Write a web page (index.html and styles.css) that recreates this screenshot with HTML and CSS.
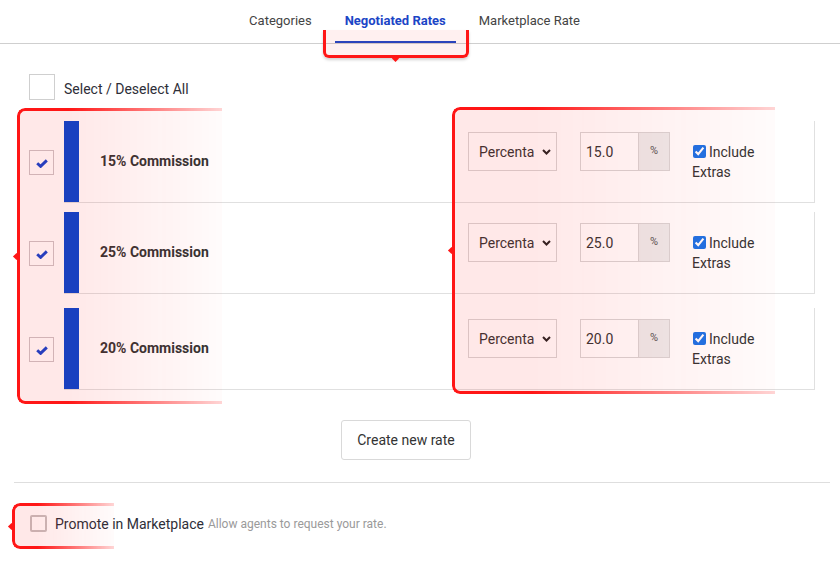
FILE: index.html
```html
<!DOCTYPE html>
<html lang="en">
<head>
<meta charset="utf-8">
<title>Negotiated Rates</title>
<link rel="stylesheet" href="styles.css">
</head>
<body>
<nav class="tabs">
  <a class="tab">Categories</a>
  <a class="tab active">Negotiated Rates</a>
  <a class="tab">Marketplace Rate</a>
</nav>

<main class="content">
  <div class="select-all">
    <span class="box big"></span>
    <span class="select-all-label">Select / Deselect All</span>
  </div>

  <div class="rates">
    <div class="rate-row first">
      <span class="box check"><svg viewBox="0 0 12 9" width="12" height="9"><path d="M1.2 4.3 L4.6 7.4 L10.8 1.4" fill="none" stroke="#1042d0" stroke-width="2.9"/></svg></span>
      <div class="card">
        <span class="bar"></span>
        <span class="rate-name">15% Commission</span>
        <div class="controls">
          <div class="select"><span class="select-text">Percenta</span><svg class="chev" viewBox="0 0 9 6" width="9" height="6"><path d="M1 1 L4.5 4.5 L8 1" fill="none" stroke="#222" stroke-width="2"/></svg></div>
          <div class="input-group"><span class="input">15.0</span><span class="addon">%</span></div>
          <label class="include"><input type="checkbox" checked>Include Extras</label>
        </div>
      </div>
    </div>
    <div class="rate-row second">
      <span class="box check"><svg viewBox="0 0 12 9" width="12" height="9"><path d="M1.2 4.3 L4.6 7.4 L10.8 1.4" fill="none" stroke="#1042d0" stroke-width="2.9"/></svg></span>
      <div class="card">
        <span class="bar"></span>
        <span class="rate-name">25% Commission</span>
        <div class="controls">
          <div class="select"><span class="select-text">Percenta</span><svg class="chev" viewBox="0 0 9 6" width="9" height="6"><path d="M1 1 L4.5 4.5 L8 1" fill="none" stroke="#222" stroke-width="2"/></svg></div>
          <div class="input-group"><span class="input">25.0</span><span class="addon">%</span></div>
          <label class="include"><input type="checkbox" checked>Include Extras</label>
        </div>
      </div>
    </div>
    <div class="rate-row">
      <span class="box check"><svg viewBox="0 0 12 9" width="12" height="9"><path d="M1.2 4.3 L4.6 7.4 L10.8 1.4" fill="none" stroke="#1042d0" stroke-width="2.9"/></svg></span>
      <div class="card">
        <span class="bar"></span>
        <span class="rate-name">20% Commission</span>
        <div class="controls">
          <div class="select"><span class="select-text">Percenta</span><svg class="chev" viewBox="0 0 9 6" width="9" height="6"><path d="M1 1 L4.5 4.5 L8 1" fill="none" stroke="#222" stroke-width="2"/></svg></div>
          <div class="input-group"><span class="input">20.0</span><span class="addon">%</span></div>
          <label class="include"><input type="checkbox" checked>Include Extras</label>
        </div>
      </div>
    </div>
  </div>

  <div class="actions">
    <button class="btn">Create new rate</button>
  </div>

  <hr class="divider">

  <div class="promote">
    <span class="small-box"></span>
    <span class="promote-label">Promote in Marketplace</span>
    <span class="hint">Allow agents to request your rate.</span>
  </div>
</main>

<div class="annot annot-tab"></div>
<div class="annot annot-side annot-left"></div>
<div class="annot annot-side annot-right"></div>
<div class="annot annot-side annot-promote"></div>
</body>
</html>
```

FILE: styles.css
```css
* { box-sizing: border-box; }

html, body {
  margin: 0;
  padding: 0;
  background: #fff;
}

body {
  font-family: Roboto, "Liberation Sans", Arial, sans-serif;
  color: #333;
  width: 840px;
  height: 576px;
  overflow: hidden;
  position: relative;
}

/* Tabs */
.tabs {
  display: flex;
  justify-content: center;
  gap: 13px;
  padding-right: 11px;
  height: 44px;
  border-bottom: 1px solid #cfcfcf;
}

.tab {
  display: block;
  padding: 0 10px;
  font-size: 13px;
  line-height: 41px;
  height: 43px;
  color: #444;
  border-bottom: 2px solid transparent;
}

.tab.active {
  color: #1b45c6;
  font-weight: 700;
  border-bottom-color: #1b45c6;
}

/* Content */
.content {
  margin: 0 25px 0 29px;
}

.select-all {
  display: flex;
  align-items: center;
  margin-top: 30px;
  gap: 9px;
}

.select-all-label {
  font-size: 14px;
  color: #2e2e38;
  padding-top: 3px;
}

.box {
  display: flex;
  align-items: center;
  justify-content: center;
  width: 25px;
  height: 25px;
  border: 1px solid #cdc4c8;
  background: #fff;
  flex: none;
}

.box.big {
  width: 26px;
  height: 26px;
  border-color: #cfcfcf;
}

.box.check svg {
  margin-top: 2px;
}

.rates {
  margin-top: 21px;
}

.rate-row {
  display: flex;
  align-items: center;
  gap: 10px;
}

.rate-row.first { margin-bottom: 9px; }
.rate-row.second { margin-bottom: 14px; }

.card {
  flex: 1;
  display: flex;
  height: 82px;
  border-right: 1px solid #e0e0e0;
  border-bottom: 1px solid #e0e0e0;
  background: #fff;
}

.bar {
  width: 15px;
  flex: none;
  background: #0044d2;
}

.rate-name {
  flex: 1;
  align-self: center;
  margin-left: 21px;
  margin-top: -2px;
  font-size: 14px;
  font-weight: 700;
  color: #333;
}

.controls {
  display: flex;
  align-items: flex-start;
  padding-top: 11px;
  padding-right: 22px;
}

.select {
  display: flex;
  align-items: center;
  width: 89px;
  height: 39px;
  border: 1px solid #d8d6d6;
  background: #fff;
  padding-left: 10px;
  padding-right: 5px;
  font-size: 14px;
  color: #333;
}

.select-text {
  white-space: nowrap;
}

.chev {
  margin-left: auto;
  margin-top: 1px;
}

.input-group {
  display: flex;
  margin-left: 23px;
  height: 39px;
  border: 1px solid #d8d6d6;
  width: 90px;
}

.input {
  width: 58px;
  display: flex;
  align-items: center;
  padding-left: 5px;
  font-size: 14px;
  color: #333;
  background: #fff;
  border-right: 1px solid #d8d6d6;
}

.addon {
  flex: 1;
  display: flex;
  align-items: center;
  justify-content: center;
  background: #ececec;
  font-size: 11px;
  color: #555;
  padding-bottom: 3px;
}

.include {
  display: block;
  width: 100px;
  margin-left: 22px;
  margin-top: 10px;
  font-size: 14px;
  line-height: 20px;
  color: #333;
}

.include input {
  width: 13px;
  height: 13px;
  margin: 0 3px 0 1px;
  vertical-align: -1px;
  accent-color: #1a73e8;
}

/* Button */
.actions {
  display: flex;
  justify-content: center;
  padding-right: 32px;
  margin-top: 30px;
}

.btn {
  width: 130px;
  height: 40px;
  background: #fff;
  border: 1px solid #d9d9d9;
  border-radius: 3px;
  font-family: Roboto, "Liberation Sans", Arial, sans-serif;
  font-size: 14px;
  color: #333;
}

.divider {
  margin: 22px -15px 0 -15px;
  border: 0;
  border-top: 1px solid #dedede;
  height: 0;
}

/* Promote */
.promote {
  display: flex;
  align-items: center;
  margin-top: 32px;
  margin-left: 1px;
}

.small-box {
  width: 17px;
  height: 17px;
  border: 2px solid #c6c0c0;
  border-radius: 2px;
  background: #fff;
  flex: none;
}

.promote-label {
  margin-left: 8px;
  font-size: 14px;
  color: #2e2e38;
}

.hint {
  margin-left: 4px;
  font-size: 12px;
  color: #9a9a9a;
  padding-top: 1px;
}

/* Annotation overlays */
.annot {
  position: absolute;
  pointer-events: none;
}

.annot-tab {
  left: 323px;
  top: 30px;
  width: 146px;
  height: 28px;
  border: 3px solid #ff1616;
  border-top: none;
  border-radius: 0 0 6px 6px;
  background: rgba(255, 40, 40, 0.07);
  box-shadow: 0 2px 3px rgba(0, 0, 0, 0.18);
}

.annot-tab::before {
  content: "";
  position: absolute;
  left: calc(50% - 3px);
  bottom: -6px;
  width: 5px;
  height: 5px;
  background: #ff1616;
  transform: rotate(45deg);
}

.annot-side::after {
  content: "";
  position: absolute;
  inset: 0;
  border: 3px solid #ff1616;
  border-right: none;
  border-radius: 8px 0 0 8px;
  background: rgba(255, 30, 30, 0.1);
  -webkit-mask-image: linear-gradient(to right, #000 0%, #000 25%, rgba(0, 0, 0, 0.18) 100%);
  mask-image: linear-gradient(to right, #000 0%, #000 25%, rgba(0, 0, 0, 0.18) 100%);
}

.annot-side::before {
  content: "";
  position: absolute;
  left: -3.5px;
  top: calc(50% - 2.5px);
  width: 5px;
  height: 5px;
  background: #ff1616;
  transform: rotate(45deg);
}

.annot-left {
  left: 17px;
  top: 108px;
  width: 205px;
  height: 296px;
}

.annot-right {
  left: 452px;
  top: 107px;
  width: 323px;
  height: 287px;
}

.annot-promote {
  left: 12px;
  top: 503px;
  width: 102px;
  height: 46px;
}
```
